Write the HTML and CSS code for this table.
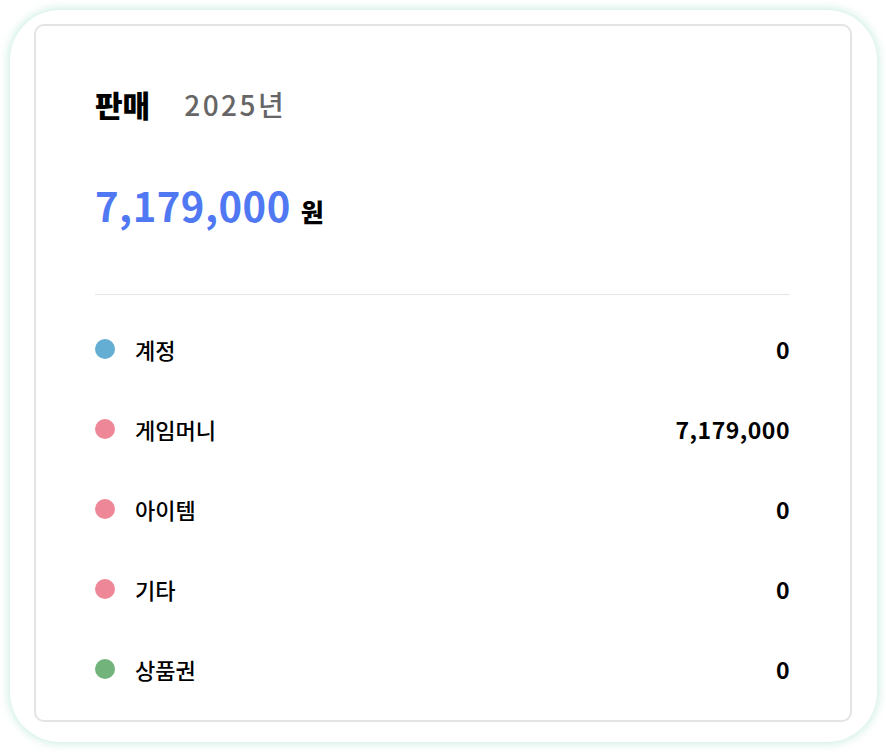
FILE: index.html
```html
<!DOCTYPE html>
<html lang="ko">
<head>
<meta charset="utf-8">
<link rel="stylesheet" href="styles.css">
</head>
<body>
<div class="frame">
  <div class="card">
    <div class="title">
      <span class="title-main">판매</span>
      <span class="title-year">2025년</span>
    </div>
    <div class="amount">
      <span class="amount-num">7,179,000</span>
      <span class="amount-unit">원</span>
    </div>
    <div class="divider"></div>
    <ul class="list">
      <li class="row"><span class="dot dot-blue"></span><span class="label">계정</span><span class="value">0</span></li>
      <li class="row"><span class="dot dot-pink"></span><span class="label">게임머니</span><span class="value">7,179,000</span></li>
      <li class="row"><span class="dot dot-pink"></span><span class="label">아이템</span><span class="value">0</span></li>
      <li class="row"><span class="dot dot-pink"></span><span class="label">기타</span><span class="value">0</span></li>
      <li class="row"><span class="dot dot-green"></span><span class="label">상품권</span><span class="value">0</span></li>
    </ul>
  </div>
</div>
</body>
</html>
```
FILE: styles.css
```css
* { box-sizing: border-box; }
html, body { margin: 0; padding: 0; background: #ffffff; }
body {
  font-family: "Noto Sans CJK KR", "Noto Sans", sans-serif;
  color: #000;
}
.frame {
  margin: 10px;
  width: 867px;
  height: 732px;
  padding: 14px 25px 20px 24px;
  background: #fff;
  border-radius: 50px;
  box-shadow: 0 0 9px 2px rgba(150, 220, 190, 0.45);
}
.card {
  width: 818px;
  height: 698px;
  border: 2px solid #e4e4e4;
  border-radius: 10px;
  padding: 60px 60px 0 59px;
}
.title {
  display: flex;
  align-items: center;
  height: 36px;
  gap: 34px;
}
.title-main {
  font-size: 30px;
  font-weight: 900;
}
.title-year {
  font-size: 28px;
  color: #666;
  font-weight: 500;
  letter-spacing: 2.5px;
}
.amount {
  display: flex;
  align-items: baseline;
  gap: 10px;
  margin-top: 54px;
  height: 50px;
}
.amount-num {
  font-size: 40px;
  font-weight: 700;
  color: #5078f2;
  letter-spacing: 0.5px;
}
.amount-unit {
  font-size: 25px;
  font-weight: 900;
}
.divider {
  margin-top: 68px;
  height: 1px;
  background: #e5e5e5;
}
.list {
  list-style: none;
  margin: 14px 0 0;
  padding: 0;
}
.row {
  display: flex;
  align-items: center;
  height: 80px;
}
.dot {
  width: 20px;
  height: 20px;
  border-radius: 50%;
  flex: none;
}
.dot-blue { background: #64add3; }
.dot-pink { background: #ee8798; }
.dot-green { background: #72b37c; }
.label {
  margin-left: 20px;
  font-size: 22px;
  font-weight: 500;
  flex: 1;
}
.value {
  font-size: 23px;
  font-weight: 700;
  letter-spacing: 0.5px;
}
```
